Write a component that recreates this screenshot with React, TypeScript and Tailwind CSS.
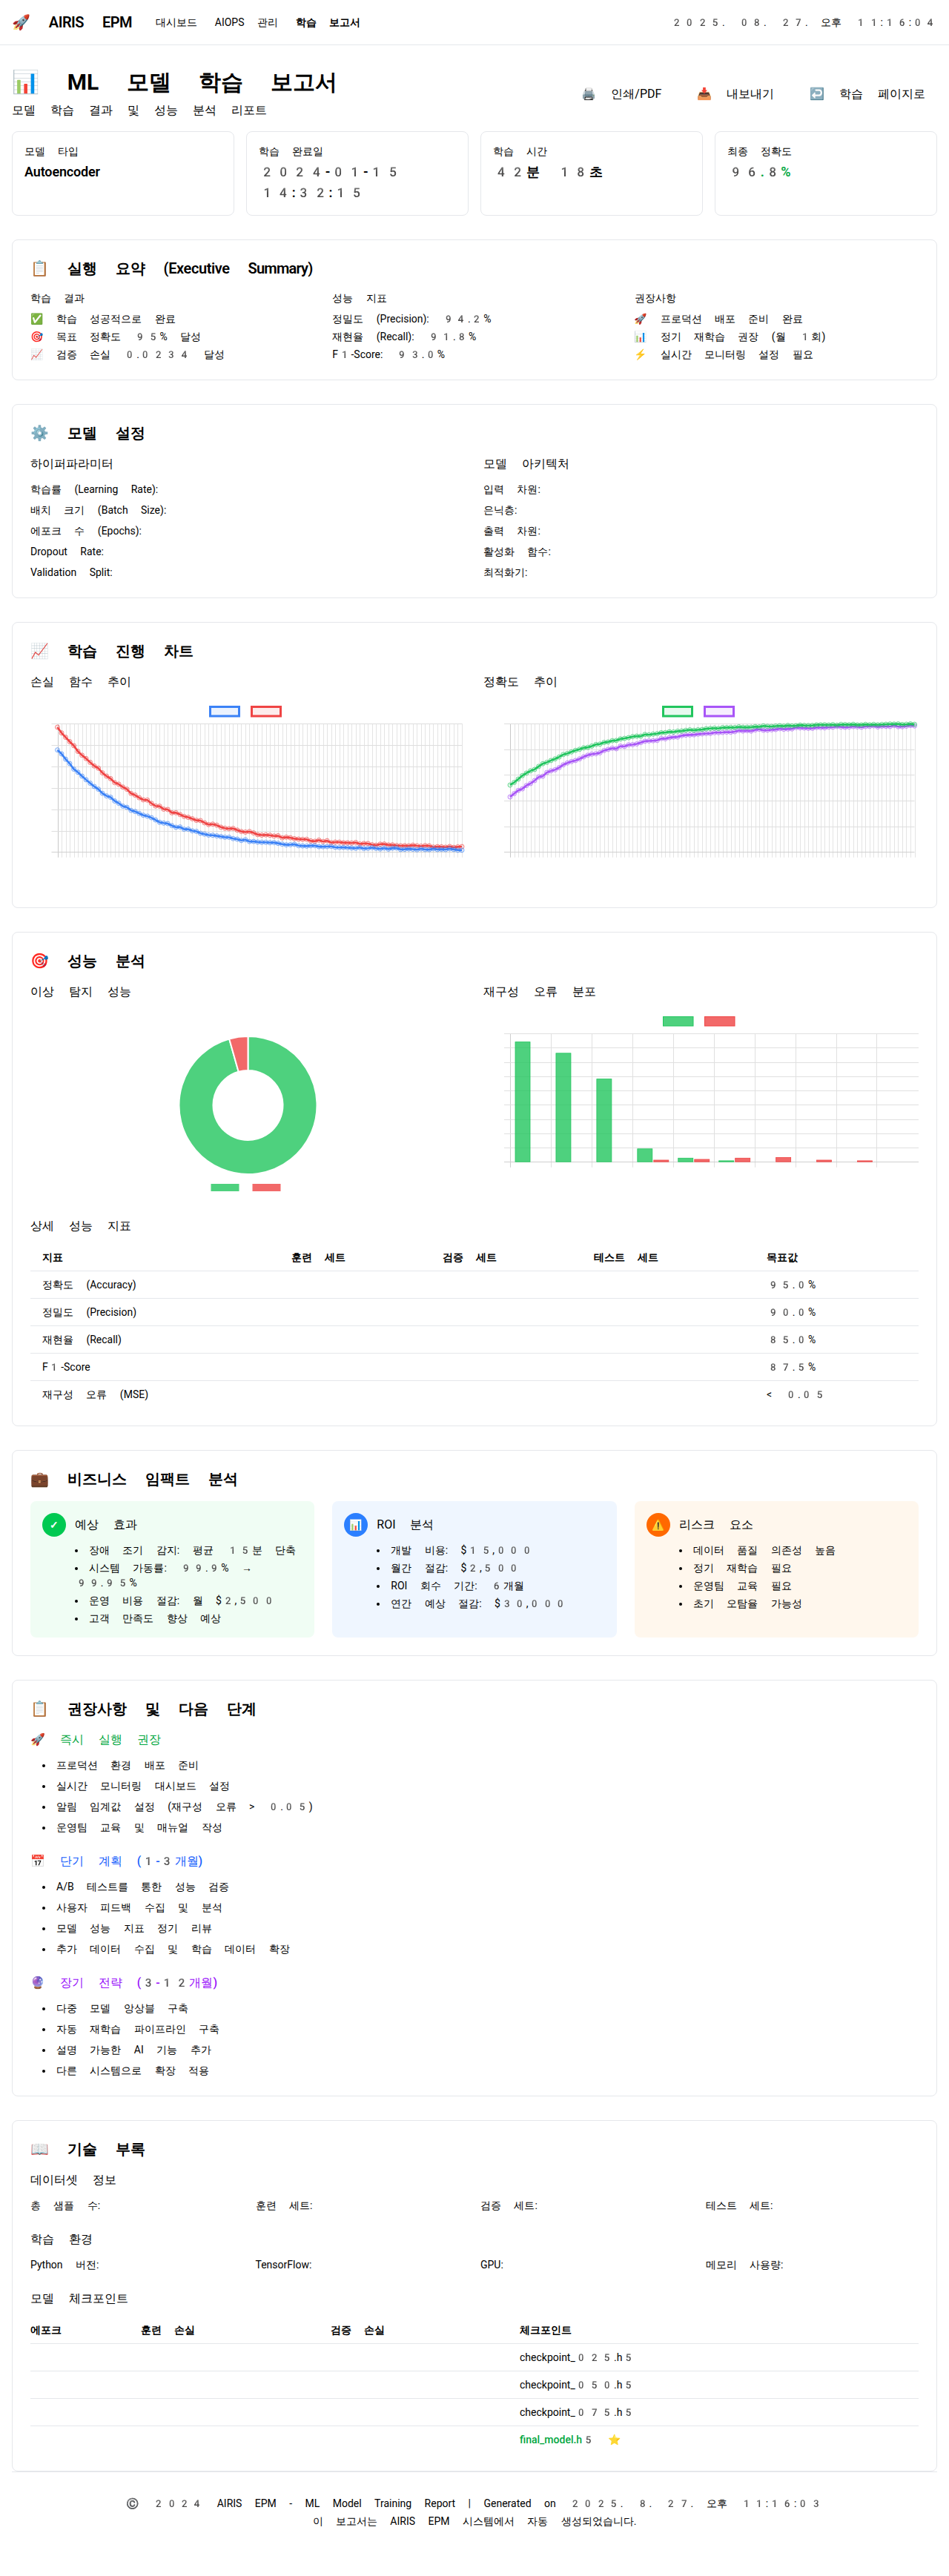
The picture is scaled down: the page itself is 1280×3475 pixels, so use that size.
import React from "react";

const noise = (i: number, s: number) => {
  const v = Math.sin(i * 12.9898 + s * 78.233) * 43758.5453;
  return (v - Math.floor(v)) * 2 - 1;
};

type Series = { color: string; fill: string; start: number; end: number; tau: number; seed: number; amp: number };

function LineChart({ yLines, series, legend, legendX, plotL }: { yLines: number[]; series: Series[]; legend: { stroke: string; fill: string }[]; legendX: number[]; plotL: number }) {
  const xs = Array.from({ length: 100 }, (_, i) => plotL + i * (545.5 / 99));
  return (
    <svg width="587" height="256" className="block">
      {legend.map((l, i) => (
        <rect key={i} x={legendX[i] + 1.5} y={9.5} width={39} height={12.5} fill={l.fill} stroke={l.stroke} strokeWidth={3} />
      ))}
      {xs.map((x, i) => (
        <line key={i} x1={Math.round(x) + 0.5} x2={Math.round(x) + 0.5} y1={32} y2={212.7} stroke={i === 0 ? "#c8c8c8" : "#e4e4e4"} strokeWidth={1} />
      ))}
      {yLines.map((y, i) => (
        <line key={i} x1={plotL - 8} x2={plotL + 545.5} y1={Math.round(y) + 0.5} y2={Math.round(y) + 0.5} stroke={i === yLines.length - 1 ? "#cfcfcf" : "#dedede"} strokeWidth={1} />
      ))}
      {series.map((s, k) => {
        const pts = xs.map((x, i) => {
          const t = s.end + (s.start - s.end) * Math.exp(-i / s.tau);
          const y = Math.max(32, t + (i === 0 ? 0 : noise(i, s.seed) * s.amp * (0.6 + 0.6 * Math.exp(-i / 60))));
          return [x, y];
        });
        return (
          <g key={k}>
            <polyline points={pts.map((p) => p.join(",")).join(" ")} fill="none" stroke={s.color} strokeWidth={2.6} />
            {pts.map((p, i) => (
              <circle key={i} cx={p[0]} cy={p[1]} r={3} fill={s.fill} stroke={s.color} strokeOpacity={0.65} strokeWidth={1} />
            ))}
          </g>
        );
      })}
    </svg>
  );
}

function Donut() {
  const cx = 293.5, cy = 129, R = 93, r = 47;
  const a = (-15.8 * Math.PI) / 180;
  const p = (rad: number, t: number) => `${cx + rad * Math.sin(t)} ${cy - rad * Math.cos(t)}`;
  const green = `M ${p(R, 0)} A ${R} ${R} 0 1 1 ${p(R, a)} L ${p(r, a)} A ${r} ${r} 0 1 0 ${p(r, 0)} Z`;
  const red = `M ${p(R, a)} A ${R} ${R} 0 0 1 ${p(R, 0)} L ${p(r, 0)} A ${r} ${r} 0 0 0 ${p(r, a)} Z`;
  return (
    <svg width="587" height="256" className="block">
      <path d={green} fill="rgba(34,197,94,0.8)" stroke="#fff" strokeWidth={2} />
      <path d={red} fill="rgba(239,68,68,0.8)" stroke="#fff" strokeWidth={2} />
      <rect x={243.5} y={235} width={38} height={10} fill="rgba(34,197,94,0.8)" />
      <rect x={299.5} y={235} width={38} height={10} fill="rgba(239,68,68,0.8)" />
    </svg>
  );
}

function Bars() {
  const green = [43.6, 58.8, 93.6, 187.8, 200.3, 203.9];
  const red: [number, number][] = [[3, 203], [4, 202], [5, 200.3], [6, 199.4], [7, 203], [8, 203.9]];
  const base = 205.2;
  const step = 54.94;
  return (
    <svg width="587" height="256" className="block">
      <rect x={242.5} y={9.5} width={40.5} height={12.5} fill="rgba(34,197,94,0.8)" stroke="#22c55e" />
      <rect x={298.5} y={9.5} width={40.5} height={12.5} fill="rgba(239,68,68,0.8)" stroke="#ef4444" />
      {Array.from({ length: 10 }, (_, i) => (
        <line key={i} x1={Math.round(36 + i * step) + 0.5} x2={Math.round(36 + i * step) + 0.5} y1={32} y2={212.8} stroke={i === 0 ? "#cfcfcf" : "#e0e0e0"} />
      ))}
      {Array.from({ length: 10 }, (_, i) => (
        <line key={i} x1={28} x2={587} y1={Math.round(32 + i * 19.25) + 0.5} y2={Math.round(32 + i * 19.25) + 0.5} stroke={i === 9 ? "#cfcfcf" : "#e0e0e0"} />
      ))}
      {green.map((t, i) => (
        <rect key={i} x={36 + i * step + 7} y={t} width={20} height={base - t} fill="rgba(34,197,94,0.8)" stroke="#22c55e" strokeWidth={0.8} />
      ))}
      {red.map(([k, t], i) => (
        <rect key={i} x={36 + k * step + 29} y={t} width={20} height={base - t} fill="rgba(239,68,68,0.8)" stroke="#ef4444" strokeWidth={0.8} />
      ))}
    </svg>
  );
}

function Card({ label, children }: { label: string; children: React.ReactNode }) {
  return (
    <div className="bg-white rounded-lg border border-gray-200 p-4">
      <div className="text-sm mb-1">{label}</div>
      <div className="text-lg font-semibold">{children}</div>
    </div>
  );
}

function Section({ title, children }: { title: React.ReactNode; children: React.ReactNode }) {
  return (
    <section className="bg-white rounded-lg border border-gray-200 p-6 mb-8">
      <h2 className="text-xl font-semibold mb-4">{title}</h2>
      {children}
    </section>
  );
}

function Bullets({ items, className }: { items: string[]; className: string }) {
  return (
    <ul className={`list-disc list-inside text-sm ${className}`}>
      {items.map((t) => (
        <li key={t}>{t}</li>
      ))}
    </ul>
  );
}

function Impact({ bg, circle, icon, title, items }: { bg: string; circle: string; icon: string; title: string; items: string[] }) {
  return (
    <div className={`rounded-lg p-4 ${bg}`}>
      <div className="flex items-center gap-3 mb-2">
        <div className={`w-8 h-8 rounded-full flex items-center justify-center text-white text-sm font-bold ${circle}`}>{icon}</div>
        <div className="text-base">{title}</div>
      </div>
      <ul className="list-disc list-inside text-sm space-y-1 ml-11">
        {items.map((t) => (
          <li key={t}>{t}</li>
        ))}
      </ul>
    </div>
  );
}

const metrics: [string, string][] = [
  ["정확도 (Accuracy)", "95.0%"],
  ["정밀도 (Precision)", "90.0%"],
  ["재현율 (Recall)", "85.0%"],
  ["F1-Score", "87.5%"],
  ["재구성 오류 (MSE)", "< 0.05"],
];

export default function App() {
  return (
    <div className="bg-white min-h-screen text-black font-['Noto_Color_Emoji','Roboto',sans-serif]">
      <nav className="h-[61px] border-b border-gray-200 flex items-center justify-between px-4">
        <div className="flex items-center">
          <div className="text-xl font-semibold mr-8">🚀 <span className="tracking-[-0.5px]">AIRIS</span> <span className="tracking-[-0.6px]">EPM</span></div>
          <div className="flex items-center gap-6 text-sm">
            <span>대시보드</span>
            <span>AIOPS 관리</span>
            <span className="font-semibold">학습 보고서</span>
          </div>
        </div>
        <div className="text-sm">2025. 08. 27. 오후 11:16:04</div>
      </nav>
      <main className="px-4 pt-8">
        <div className="flex items-center justify-between mb-4">
          <div>
            <h1 className="text-3xl font-bold mb-2">📊 ML 모델 학습 보고서</h1>
            <p>모델 학습 결과 및 성능 분석 리포트</p>
          </div>
          <div className="flex items-center gap-4">
            <button className="px-4 py-2">🖨️ 인쇄/PDF</button>
            <button className="px-4 py-2">📥 내보내기</button>
            <button className="px-4 py-2">↩️ 학습 페이지로</button>
          </div>
        </div>
        <div className="grid grid-cols-4 gap-4 mb-8">
          <Card label="모델 타입"><span className="tracking-[-0.15px]">Autoencoder</span></Card>
          <Card label="학습 완료일">2024-01-15 14:32:15</Card>
          <Card label="학습 시간">42분 18초</Card>
          <Card label="최종 정확도"><span className="text-green-600">96.8%</span></Card>
        </div>

        <Section title={<>📋 실행 요약 <span className="tracking-[-0.4px]">(Executive</span> <span className="tracking-[-0.8px]">Summary)</span></>}>
          <div className="grid grid-cols-3 gap-6">
            <div>
              <h3 className="text-sm mb-2">학습 결과</h3>
              <div className="text-sm space-y-1">
                <div>✅ 학습 성공적으로 완료</div>
                <div>🎯 목표 정확도 95% 달성</div>
                <div>📈 검증 손실 0.0234 달성</div>
              </div>
            </div>
            <div>
              <h3 className="text-sm mb-2">성능 지표</h3>
              <div className="text-sm space-y-1">
                <div>정밀도 (Precision): 94.2%</div>
                <div>재현율 (Recall): 91.8%</div>
                <div>F1-Score: 93.0%</div>
              </div>
            </div>
            <div>
              <h3 className="text-sm mb-2">권장사항</h3>
              <div className="text-sm space-y-1">
                <div>🚀 프로덕션 배포 준비 완료</div>
                <div>📊 정기 재학습 권장 (월 1회)</div>
                <div>⚡ 실시간 모니터링 설정 필요</div>
              </div>
            </div>
          </div>
        </Section>

        <Section title="⚙️ 모델 설정">
          <div className="grid grid-cols-2 gap-6">
            <div>
              <h3 className="text-base mb-3">하이퍼파라미터</h3>
              <div className="text-sm space-y-2">
                <div>학습률 (Learning Rate):</div>
                <div>배치 크기 (Batch Size):</div>
                <div>에포크 수 (Epochs):</div>
                <div>Dropout Rate:</div>
                <div>Validation Split:</div>
              </div>
            </div>
            <div>
              <h3 className="text-base mb-3">모델 아키텍처</h3>
              <div className="text-sm space-y-2">
                <div>입력 차원:</div>
                <div>은닉층:</div>
                <div>출력 차원:</div>
                <div>활성화 함수:</div>
                <div>최적화기:</div>
              </div>
            </div>
          </div>
        </Section>

        <Section title="📈 학습 진행 차트">
          <div className="grid grid-cols-2 gap-6">
            <div>
              <h3 className="text-base mb-3">손실 함수 추이</h3>
              <LineChart
                plotL={36.5}
                legendX={[241, 297]}
                legend={[{ stroke: "#3b82f6", fill: "rgba(59,130,246,0.1)" }, { stroke: "#ef4444", fill: "rgba(239,68,68,0.1)" }]}
                yLines={[32, 60.9, 89.8, 118.7, 147.6, 176.5, 205.3]}
                series={[
                  { color: "#ef4444", fill: "rgba(239,68,68,0.1)", start: 37, end: 201, tau: 23.5, seed: 1, amp: 1.5 },
                  { color: "#3b82f6", fill: "rgba(59,130,246,0.1)", start: 67.7, end: 203, tau: 20, seed: 2, amp: 1.3 },
                ]}
              />
            </div>
            <div>
              <h3 className="text-base mb-3">정확도 추이</h3>
              <LineChart
                plotL={36}
                legendX={[241, 297]}
                legend={[{ stroke: "#22c55e", fill: "rgba(34,197,94,0.1)" }, { stroke: "#a855f7", fill: "rgba(168,85,247,0.1)" }]}
                yLines={[32, 66.7, 101.3, 136, 170.7, 205.3]}
                series={[
                  { color: "#a855f7", fill: "rgba(168,85,247,0.1)", start: 131, end: 34, tau: 22.7, seed: 3, amp: 1.2 },
                  { color: "#22c55e", fill: "rgba(34,197,94,0.1)", start: 115, end: 32.5, tau: 19.4, seed: 4, amp: 0.8 },
                ]}
              />
            </div>
          </div>
        </Section>

        <Section title="🎯 성능 분석">
          <div className="grid grid-cols-2 gap-6 mb-6">
            <div>
              <h3 className="text-base mb-3">이상 탐지 성능</h3>
              <Donut />
            </div>
            <div>
              <h3 className="text-base mb-3">재구성 오류 분포</h3>
              <Bars />
            </div>
          </div>
          <h3 className="text-base mb-3">상세 성능 지표</h3>
          <table className="w-full table-fixed text-sm">
            <thead>
              <tr className="border-b border-gray-200 text-left">
                <th className="w-[336px] px-4 py-2 font-semibold">지표</th>
                <th className="w-[204px] px-4 py-2 font-semibold">훈련 세트</th>
                <th className="w-[204px] px-4 py-2 font-semibold">검증 세트</th>
                <th className="w-[233px] px-4 py-2 font-semibold">테스트 세트</th>
                <th className="px-4 py-2 font-semibold">목표값</th>
              </tr>
            </thead>
            <tbody>
              {metrics.map(([a, b], i) => (
                <tr key={a} className={i < 4 ? "border-b border-gray-200" : ""}>
                  <td className="px-4 py-2">{a}</td>
                  <td className="px-4 py-2"></td>
                  <td className="px-4 py-2"></td>
                  <td className="px-4 py-2"></td>
                  <td className="px-4 py-2">{b}</td>
                </tr>
              ))}
            </tbody>
          </table>
        </Section>

        <Section title="💼 비즈니스 임팩트 분석">
          <div className="grid grid-cols-3 gap-6">
            <Impact bg="bg-green-50" circle="bg-green-500" icon="✓" title="예상 효과" items={["장애 조기 감지: 평균 15분 단축", "시스템 가동률: 99.9% → 99.95%", "운영 비용 절감: 월 $2,500", "고객 만족도 향상 예상"]} />
            <Impact bg="bg-blue-50" circle="bg-blue-500" icon="📊" title="ROI 분석" items={["개발 비용: $15,000", "월간 절감: $2,500", "ROI 회수 기간: 6개월", "연간 예상 절감: $30,000"]} />
            <Impact bg="bg-orange-50" circle="bg-orange-500" icon="⚠️" title="리스크 요소" items={["데이터 품질 의존성 높음", "정기 재학습 필요", "운영팀 교육 필요", "초기 오탐율 가능성"]} />
          </div>
        </Section>

        <Section title="📋 권장사항 및 다음 단계">
          <div className="mb-6">
            <h4 className="text-base font-medium text-green-600 mb-3">🚀 즉시 실행 권장</h4>
            <Bullets className="ml-4 space-y-2" items={["프로덕션 환경 배포 준비", "실시간 모니터링 대시보드 설정", "알림 임계값 설정 (재구성 오류 > 0.05)", "운영팀 교육 및 매뉴얼 작성"]} />
          </div>
          <div className="mb-6">
            <h4 className="text-base font-medium text-blue-600 mb-3">📅 단기 계획 (1-3개월)</h4>
            <Bullets className="ml-4 space-y-2" items={["A/B 테스트를 통한 성능 검증", "사용자 피드백 수집 및 분석", "모델 성능 지표 정기 리뷰", "추가 데이터 수집 및 학습 데이터 확장"]} />
          </div>
          <div>
            <h4 className="text-base font-medium text-purple-600 mb-3">🔮 장기 전략 (3-12개월)</h4>
            <Bullets className="ml-4 space-y-2" items={["다중 모델 앙상블 구축", "자동 재학습 파이프라인 구축", "설명 가능한 AI 기능 추가", "다른 시스템으로 확장 적용"]} />
          </div>
        </Section>

        <section className="bg-white rounded-lg border border-gray-200 p-6">
          <h2 className="text-xl font-semibold mb-4">📖 기술 부록</h2>
          <h3 className="text-base mb-3">데이터셋 정보</h3>
          <div className="grid grid-cols-4 gap-4 text-sm mb-6">
            <div>총 샘플 수:</div>
            <div>훈련 세트:</div>
            <div>검증 세트:</div>
            <div>테스트 세트:</div>
          </div>
          <h3 className="text-base mb-3">학습 환경</h3>
          <div className="grid grid-cols-4 gap-4 text-sm mb-6">
            <div>Python 버전:</div>
            <div>TensorFlow:</div>
            <div>GPU:</div>
            <div>메모리 사용량:</div>
          </div>
          <h3 className="text-base mb-3">모델 체크포인트</h3>
          <table className="w-full table-fixed text-sm">
            <thead>
              <tr className="border-b border-gray-200 text-left">
                <th className="w-[149px] py-2 font-semibold">에포크</th>
                <th className="w-[256px] py-2 font-semibold">훈련 손실</th>
                <th className="w-[255px] py-2 font-semibold">검증 손실</th>
                <th className="py-2 font-semibold">체크포인트</th>
              </tr>
            </thead>
            <tbody>
              {["checkpoint_025.h5", "checkpoint_050.h5", "checkpoint_075.h5"].map((c) => (
                <tr key={c} className="border-b border-gray-200">
                  <td className="py-2"></td>
                  <td className="py-2"></td>
                  <td className="py-2"></td>
                  <td className="py-2">{c}</td>
                </tr>
              ))}
              <tr>
                <td className="py-2"></td>
                <td className="py-2"></td>
                <td className="py-2"></td>
                <td className="py-2 text-green-600 font-medium">final_model.h5 ⭐</td>
              </tr>
            </tbody>
          </table>
        </section>

        <footer className="border-t border-gray-200 pt-8 text-center text-sm">
          <p className="mb-1">© 2024 AIRIS EPM - ML Model Training Report | Generated on 2025. 8. 27. 오후 11:16:03</p>
          <p>이 보고서는 AIRIS EPM 시스템에서 자동 생성되었습니다.</p>
        </footer>
      </main>
    </div>
  );
}
